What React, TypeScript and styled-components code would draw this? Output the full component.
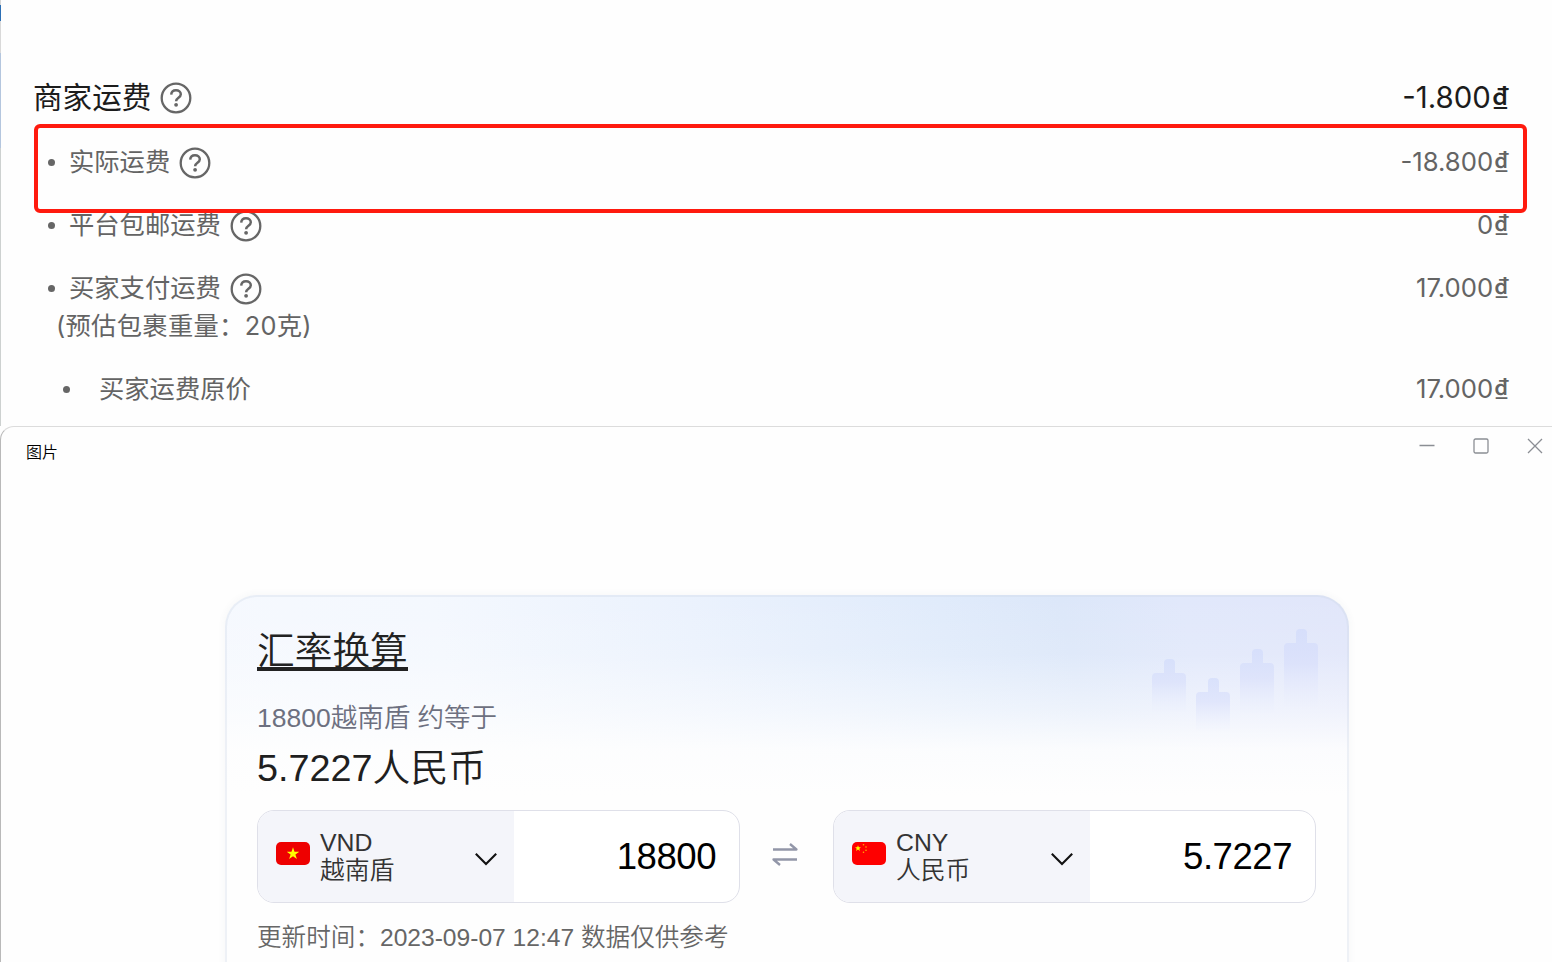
import React from 'react';
import styled, { createGlobalStyle } from 'styled-components';

const GlobalStyle = createGlobalStyle`
  * {
    box-sizing: border-box;
  }

  body {
    margin: 0;
    background: #fefefe;
    font-family: 'Liberation Sans', 'Noto Sans CJK SC', sans-serif;
    font-weight: 350;
    overflow: hidden;
  }
`;

const Page = styled.div`
  display: flex;
  flex-direction: column;
  width: 1552px;
  height: 962px;
  overflow: hidden;
  background: linear-gradient(
    #d5d5d5 0 5px,
    #2c6fb5 5px 21px,
    #d9d9d9 21px 53px,
    #b4c6de 53px 148px,
    #cdd1d0 148px
  );
`;

const FeePanel = styled.section`
  position: relative;
  flex: none;
  height: 426px;
  margin-left: 1px;
  padding: 79px 43px 0 32px;
  background: #fefefe;
`;

const FeeRow = styled.div<{ $gap?: number; $indent?: number; $main?: boolean }>`
  display: flex;
  align-items: center;
  height: 36px;
  margin-top: ${props => props.$gap || 0}px;
  padding-left: ${props => props.$indent || 0}px;
  color: ${props => (props.$main ? '#1c1c1c' : '#646464')};
  font-size: ${props => (props.$main ? 29.6 : 25.3)}px;
  white-space: nowrap;
`;

const Bullet = styled.span<{ $space: number }>`
  width: 7px;
  height: 7px;
  margin-right: ${props => props.$space}px;
  border-radius: 50%;
  background: #666;
`;

const FeeLabel = styled.span<{ $spacing?: number }>`
  font-family: Inter, 'Noto Sans CJK SC', sans-serif;
  font-weight: 400;
  letter-spacing: ${props => props.$spacing || 0}px;
  line-height: 36px;
`;

const FeeAmount = styled.span<{ $main?: boolean }>`
  display: flex;
  align-items: baseline;
  margin-left: auto;
  font-family: Inter, sans-serif;
  font-size: ${props => (props.$main ? 29.4 : 25.7)}px;
  font-weight: 400;
  line-height: 36px;
`;

const CurrencySign = styled.span`
  margin-bottom: -1px;
  font-family: 'Noto Sans CJK SC', sans-serif;
  font-size: 1.08em;
  font-weight: 500;
  line-height: 1;
  transform: translateY(1px);
`;

const HelpSvg = styled.svg`
  flex: none;
  width: 32px;
  height: 32px;
  margin: 1px 0 0 9px;
`;

const Highlight = styled.div`
  position: absolute;
  left: 33px;
  top: 124px;
  width: 1493px;
  height: 89px;
  border: 4px solid #ff1a0e;
  border-radius: 6px;
`;

const ViewerWindow = styled.section`
  flex: 1;
  min-height: 0;
  border-top: 1px solid #dcdcdc;
  border-left: 1px solid #b9b9b9;
  border-top-left-radius: 14px;
  background: #fefefe;
  overflow: hidden;
`;

// keeps the area behind the rounded window corner white
const WindowBackdrop = styled.div`
  display: flex;
  flex: 1;
  flex-direction: column;
  min-height: 0;
  background: #fefefe;
`;

const TitleBar = styled.header`
  display: flex;
  justify-content: space-between;
  height: 168px;
  padding: 11px 9px 0 25px;
`;

const WindowTitle = styled.span`
  padding-top: 3px;
  color: #000;
  font-size: 16px;
  line-height: 24px;
`;

const WindowControls = styled.div`
  display: flex;
  gap: 38px;

  svg {
    width: 16px;
    height: 16px;
    fill: none;
    stroke: #8b8e94;
    stroke-width: 1.3;
  }
`;

const RateCard = styled.article`
  position: relative;
  width: 1124px;
  height: 400px;
  margin-left: 224px;
  padding: 31px 31px 0 30px;
  border: 2px solid rgba(205, 214, 230, 0.32);
  border-radius: 32px;
  background:
    linear-gradient(to bottom, rgba(254, 254, 254, 0) 0, rgba(254, 254, 254, 0.1) 60px, rgba(254, 254, 254, 0.5) 115px, rgba(254, 254, 254, 0.9) 155px, #fefefe 200px),
    linear-gradient(78deg, #f6f9fe 0, #f4f8fe 24%, #ebf2fd 45%, #e0ebfb 66%, #dce7f9 76%, #e1e8fb 86%, #e1e6fa 100%);
  background-origin: border-box;
  box-shadow: 0 0 8px rgba(60, 70, 90, 0.05);
`;

const Candles = styled.svg`
  position: absolute;
  left: 925px;
  top: 32px;
  width: 170px;
  height: 120px;
`;

const CardTitle = styled.h1`
  width: fit-content;
  height: 43px;
  margin: 0;
  border-bottom: 4px solid #222;
  color: #222;
  font-size: 37.7px;
  font-weight: 350;
  line-height: 46px;
`;

const Equation = styled.p`
  margin: 29px 0 0;
  color: #6d7080;
  font-size: 26.5px;
  line-height: 36px;
`;

const Result = styled.p`
  margin: 8px 0 0;
  color: #1f1f1f;
  font-size: 37.8px;
  line-height: 48px;
`;

const Converter = styled.div`
  display: flex;
  align-items: center;
  justify-content: space-between;
  margin-top: 18px;
`;

const CurrencyBox = styled.div`
  display: flex;
  width: 483px;
  height: 93px;
  border: 1.5px solid #dfe0e9;
  border-radius: 17px;
  background: #fff;
  overflow: hidden;
`;

const CurrencyPicker = styled.div`
  display: flex;
  align-items: center;
  width: 256px;
  padding: 0 16px 0 18px;
  background: #f4f5fa;
`;

const FlagSvg = styled.svg`
  flex: none;
  width: 34px;
  height: 23px;
  margin: -7px 10px 0 0;
`;

const CurrencyName = styled.div`
  display: flex;
  flex-direction: column;
  padding-top: 1px;
  color: #333;
  font-size: 24.8px;
  line-height: 28px;
`;

const Chevron = styled.svg`
  width: 24px;
  height: 14px;
  margin: 4px 0 0 auto;
`;

const CurrencyValue = styled.div`
  flex: 1;
  padding-right: 23px;
  color: #000;
  font-size: 36.6px;
  letter-spacing: -0.5px;
  line-height: 91px;
  text-align: right;
`;

const SwapSvg = styled.svg`
  width: 26px;
  height: 26px;
  margin: -5px 3px 0 0;
`;

const Updated = styled.p`
  margin: 16px 0 0;
  color: #666;
  font-size: 24.6px;
  line-height: 37px;
`;

const Help = () => (
  <HelpSvg viewBox="0 0 32 32" fill="none" stroke="#666">
    <circle cx="16" cy="16" r="14.3" strokeWidth="2.3" />
    <path d="M11.2 12.7c.2-2.8 2-4.4 4.8-4.4s4.8 1.6 4.8 4c0 3.5-4.7 3.3-4.7 6.9" strokeWidth="2.5" />
    <circle cx="16.1" cy="22.8" r="1.9" fill="#666" stroke="none" />
  </HelpSvg>
);

const VietnamFlag = () => (
  <FlagSvg viewBox="0 0 34 23">
    <rect width="34" height="23" rx="5" fill="#ee0000" />
    <path d="m17 5.2 1.5 4.5h4.8l-3.9 2.8 1.5 4.6-3.9-2.8-3.9 2.8 1.5-4.6-3.9-2.8h4.8z" fill="#ff0" />
  </FlagSvg>
);

const ChinaFlag = () => (
  <FlagSvg viewBox="0 0 34 23">
    <rect width="34" height="23" rx="5" fill="#fe0000" />
    <path d="m6 3.2.8 2h2.1L7.3 6.7l.6 2.2L6 7.6 4.1 8.9l.6-2.2-1.6-1.5h2.1z" fill="#ff0" />
    <g fill="#ffb000">
      <circle cx="11.5" cy="2.8" r=".8" />
      <circle cx="14" cy="5" r=".8" />
      <circle cx="14" cy="8.3" r=".8" />
      <circle cx="11.5" cy="10.3" r=".8" />
    </g>
  </FlagSvg>
);

interface AmountProps {
  value: string;
  main?: boolean;
}

const Amount: React.FC<AmountProps> = ({ value, main }) => (
  <FeeAmount $main={main}>
    {value}
    <CurrencySign>₫</CurrencySign>
  </FeeAmount>
);

interface CurrencyProps {
  code: string;
  name: string;
  value: string;
  flag: React.ReactNode;
}

const Currency: React.FC<CurrencyProps> = ({ code, name, value, flag }) => (
  <CurrencyBox>
    <CurrencyPicker>
      {flag}
      <CurrencyName>
        <span>{code}</span>
        <span>{name}</span>
      </CurrencyName>
      <Chevron viewBox="0 0 24 14" fill="none" stroke="#111" strokeWidth="2.1">
        <path d="M1.8 1.8 12 12 22.2 1.8" />
      </Chevron>
    </CurrencyPicker>
    <CurrencyValue>{value}</CurrencyValue>
  </CurrencyBox>
);

const candles = [
  { x: 0, y: 30, height: 35 },
  { x: 44, y: 49, height: 35 },
  { x: 88, y: 20, height: 46 },
  { x: 132, y: 0, height: 60 },
];

const App: React.FC = () => {
  return (
    <Page>
      <GlobalStyle />
      <FeePanel>
        <FeeRow $main>
          <FeeLabel>商家运费</FeeLabel>
          <Help />
          <Amount main value="-1.800" />
        </FeeRow>
        <FeeRow $gap={29} $indent={15}>
          <Bullet $space={14} />
          <FeeLabel>实际运费</FeeLabel>
          <Help />
          <Amount value="-18.800" />
        </FeeRow>
        <FeeRow $gap={27} $indent={15}>
          <Bullet $space={14} />
          <FeeLabel>平台包邮运费</FeeLabel>
          <Help />
          <Amount value="0" />
        </FeeRow>
        <FeeRow $gap={27} $indent={15}>
          <Bullet $space={14} />
          <FeeLabel>买家支付运费</FeeLabel>
          <Help />
          <Amount value="17.000" />
        </FeeRow>
        <FeeRow $gap={2} $indent={23}>
          <FeeLabel $spacing={0.3}>(预估包裹重量：20克)</FeeLabel>
        </FeeRow>
        <FeeRow $gap={27} $indent={30}>
          <Bullet $space={29} />
          <FeeLabel>买家运费原价</FeeLabel>
          <Amount value="17.000" />
        </FeeRow>
        <Highlight />
      </FeePanel>

      <WindowBackdrop>
        <ViewerWindow>
          <TitleBar>
            <WindowTitle>图片</WindowTitle>
            <WindowControls>
              <svg viewBox="0 0 16 16">
                <path d="M.5 7.5h15" />
              </svg>
              <svg viewBox="0 0 16 16">
                <rect x="1" y="1" width="14" height="14" rx="1.5" />
              </svg>
              <svg viewBox="0 0 16 16">
                <path d="m1 1 14 14M15 1 1 15" />
              </svg>
            </WindowControls>
          </TitleBar>
          <RateCard>
            <Candles viewBox="0 0 170 120">
              <defs>
                <linearGradient id="candle" x1="0" y1="0" x2="0" y2="1">
                  <stop offset="0" stopColor="#ccd7fb" stopOpacity=".55" />
                  <stop offset=".45" stopColor="#d3dafb" stopOpacity=".5" />
                  <stop offset="1" stopColor="#e6ebfd" stopOpacity="0.05" />
                </linearGradient>
              </defs>
              {candles.map(({ x, y, height }) => (
                <path
                  key={x}
                  transform={`translate(${x} ${y})`}
                  d={`M12 14V4q0-4 4-4h3q4 0 4 4v10h7q4 0 4 4v${height}H0V18q0-4 4-4z`}
                  fill="url(#candle)"
                />
              ))}
            </Candles>
            <CardTitle>汇率换算</CardTitle>
            <Equation>18800越南盾 约等于</Equation>
            <Result>5.7227人民币</Result>
            <Converter>
              <Currency code="VND" name="越南盾" value="18800" flag={<VietnamFlag />} />
              <SwapSvg viewBox="0 0 26 26" fill="none" stroke="#9296a8" strokeWidth="2.3">
                <path d="M1 8.5h23.5L18 3M25 18.5H1.5L8 24" strokeLinejoin="round" />
              </SwapSvg>
              <Currency code="CNY" name="人民币" value="5.7227" flag={<ChinaFlag />} />
            </Converter>
            <Updated>更新时间：2023-09-07 12:47 数据仅供参考</Updated>
          </RateCard>
        </ViewerWindow>
      </WindowBackdrop>
    </Page>
  );
};

export default App;
